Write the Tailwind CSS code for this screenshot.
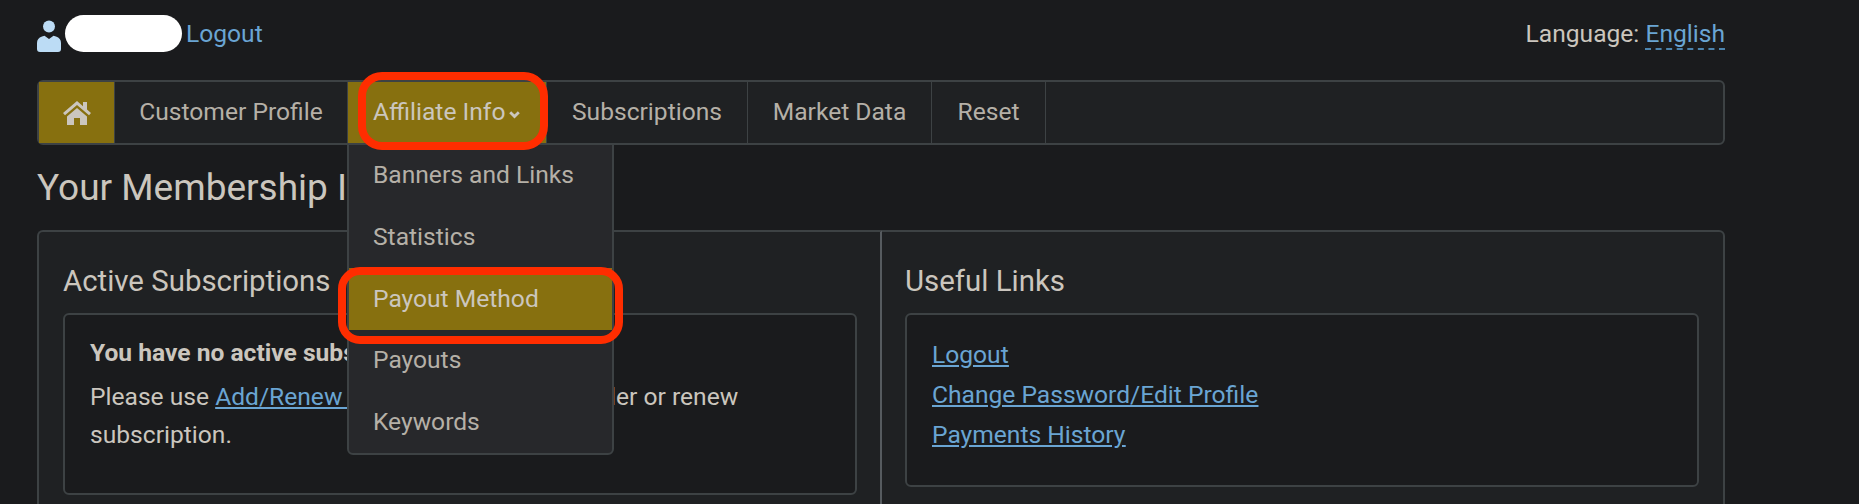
<!DOCTYPE html>
<html lang="en">
<head>
    <meta charset="UTF-8">
    <title>Your Membership</title>
    <script src="https://cdn.jsdelivr.net/npm/@tailwindcss/browser@4"></script>
</head>
<body class="bg-[#1a1b1d] font-['Roboto',sans-serif] text-[24.6px] text-[#cbc6be] overflow-hidden">
    <div class="w-[1859px] h-[504px] overflow-hidden pl-[37px] pr-[134px]">
        <!-- top bar -->
        <div class="h-[80px] flex justify-between pt-[15px]">
            <div class="flex items-start">
                <svg class="w-[24px] h-[32px] mt-[5px]" viewBox="0 0 24 32" fill="#bcdcf5">
                    <circle cx="12" cy="6.500" r="6"/>
                    <path d="M3 32q-3 0-3-3v-6q0-5 5-6.500l2.500-.8L12 19l4.500-3.300 2.500.8q5 1.500 5 6.500v6q0 3-3 3z"/>
                </svg>
                <div class="w-[117px] h-[37px] bg-white rounded-full ml-[4px]"></div>
                <a class="ml-[4px] h-[37px] leading-[37px] text-[#6aa5d3]">Logout</a>
            </div>
            <div class="h-[37px] leading-[37px]">Language: <a class="inline-block h-[31px] leading-[30px] text-[#6aa5d3] border-b-2 border-dashed border-[#4c83ad]">English</a></div>
        </div>

        <!-- nav -->
        <nav class="relative h-[65px] flex bg-[#1f2123] border-2 border-[#3d4244] rounded-md text-[#b5b0a7]">
            <a class="w-[76px] flex items-center justify-center bg-[#87700f] border-r border-[#3d4244]">
                <svg class="w-[28px] h-[24px]" viewBox="0 0 28 24" fill="#cbc6be">
                    <path d="M14 0 0 12l2 2.200L14 4l12 10.200L28 12l-4-3.400V1h-4v4.200z"/>
                    <path d="M4 15.500 14 7l10 8.500V24h-7v-7h-6v7H4z"/>
                </svg>
            </a>
            <a class="w-[233px] flex items-center justify-center border-r border-[#3d4244]">Customer Profile</a>
            <a class="w-[199px] flex items-center pl-[25px] bg-[#87700f] text-[#cbc6be] border-r border-[#3d4244]">Affiliate Info
                <svg class="w-[11px] h-[8px] ml-[4px] mt-[5px]" viewBox="0 0 11 8" fill="none" stroke="#cbc6be" stroke-width="2.800"><path d="m1.200 1.200 4.300 4.300 4.300-4.300"/></svg>
            </a>
            <a class="w-[201px] flex items-center justify-center border-r border-[#3d4244]">Subscriptions</a>
            <a class="w-[184px] flex items-center justify-center border-r border-[#3d4244]">Market Data</a>
            <a class="w-[114px] flex items-center justify-center border-r border-[#3d4244]">Reset</a>

            <!-- dropdown -->
            <div class="absolute left-[308px] top-[61px] z-10 w-[267px] h-[312px] bg-[#27282b] border-2 border-[#3d4244] rounded-b-md text-[#b5b0a7] flex flex-col">
                <a class="h-[62px] flex items-center pl-[24px]">Banners and Links</a>
                <a class="h-[62px] flex items-center pl-[24px]">Statistics</a>
                <a class="h-[62px] flex items-center pl-[24px] bg-[#87700f] text-[#cbc6be]">Payout Method</a>
                <a class="h-[62px] flex items-center pl-[24px]">Payouts</a>
                <a class="h-[62px] flex items-center pl-[24px]">Keywords</a>
            </div>
            <!-- red callouts -->
            <div class="absolute left-[319px] top-[-10px] z-20 w-[190px] h-[78px] border-[8px] border-[#ff2d00] rounded-[24px]"></div>
            <div class="absolute left-[299px] top-[185px] z-20 w-[285px] h-[77px] border-[8px] border-[#ff2d00] rounded-[22px]"></div>
        </nav>

        <h1 class="h-[85px] flex items-center text-[37px] text-[#cbc6be]">Your Membership Info</h1>

        <!-- panels -->
        <div class="grid grid-cols-[845px_1fr]">
            <section class="h-[300px] bg-[#1f2123] border-2 border-[#3d4244] border-r-[#565b5f] rounded-l-md pl-[24px] pr-[23px]">
                <h2 class="h-[81px] pt-[18px] flex items-center text-[29.400px]">Active Subscriptions</h2>
                <div class="h-[182px] bg-[#1a1b1d] border-2 border-[#3d4244] rounded-md pl-[25px] pr-[24px] pt-[19px] leading-[38px]">
                    <div class="font-bold h-[44px]">You have no active subscriptions.</div>
                    <div>Please use <a class="text-[#6aa5d3] underline">Add/Renew Subscription</a> page to order or renew<br>subscription.</div>
                </div>
            </section>
            <section class="h-[300px] bg-[#1f2123] border-2 border-l-0 border-[#3d4244] rounded-r-md pl-[23px] pr-[24px]">
                <h2 class="h-[81px] pt-[18px] flex items-center text-[29.400px]">Useful Links</h2>
                <div class="h-[174px] bg-[#1a1b1d] border-2 border-[#3d4244] rounded-md pl-[25px] pr-[24px] pt-[20px] leading-[40px] text-[#6aa5d3] underline">
                    <a class="block">Logout</a>
                    <a class="block">Change Password/Edit Profile</a>
                    <a class="block">Payments History</a>
                </div>
            </section>
        </div>
    </div>
</body>
</html>
